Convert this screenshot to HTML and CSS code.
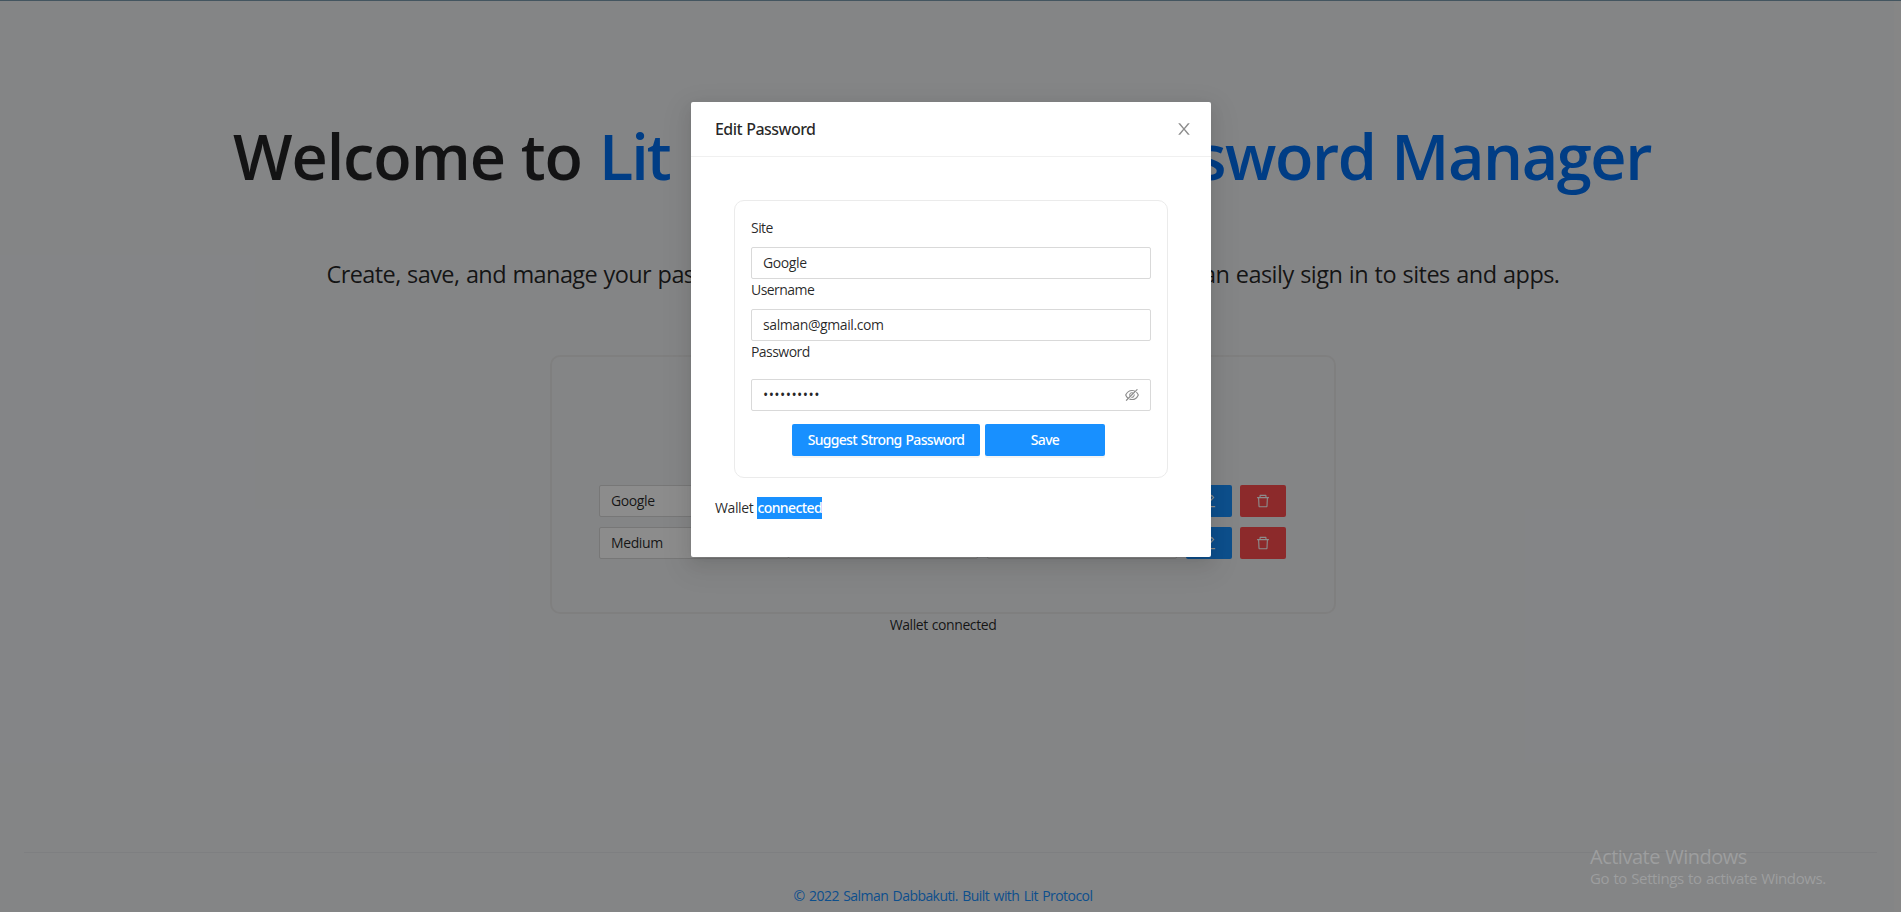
FILE: index.html
```html
<!DOCTYPE html>
<html lang="en">
<head>
<meta charset="utf-8">
<title>Password Manager</title>
<link rel="stylesheet" href="styles.css">
</head>
<body>
<svg width="0" height="0" class="defs">
  <symbol id="delete" viewBox="64 64 896 896"><path d="M360 184h-8c4.400 0 8-3.600 8-8v8h304v-8c0 4.400 3.600 8 8 8h-8v72h72v-80c0-35.300-28.700-64-64-64H352c-35.300 0-64 28.700-64 64v80h72v-72zm504 72H160c-17.700 0-32 14.300-32 32v32c0 4.400 3.600 8 8 8h60.400l24.700 523c1.600 34.100 29.800 61 63.900 61h454c34.200 0 62.300-26.800 63.900-61l24.700-523H888c4.400 0 8-3.600 8-8v-32c0-17.700-14.300-32-32-32zM731.300 840H292.700l-24.200-512h487l-24.200 512z"/></symbol>
  <symbol id="edit" viewBox="64 64 896 896"><path d="M257.700 752c2 0 4-.2 6-.5L431.900 722c2-.4 3.900-1.300 5.300-2.800l423.900-423.900a9.960 9.960 0 000-14.100L694.900 114.900c-1.900-1.900-4.400-2.900-7.100-2.900s-5.200 1-7.100 2.900L256.800 538.800c-1.500 1.500-2.400 3.300-2.800 5.300l-29.500 168.200a33.500 33.500 0 009.400 29.800c6.600 6.400 14.900 9.900 23.800 9.900zm67.400-174.400L687.800 215l73.300 73.300-362.700 362.600-88.900 15.700 15.600-89zM880 836H144c-17.700 0-32 14.300-32 32v36c0 4.400 3.600 8 8 8h784c4.400 0 8-3.600 8-8v-36c0-17.700-14.300-32-32-32z"/></symbol>
  <symbol id="close" viewBox="64 64 896 896"><path d="M563.800 512l262.500-312.900c4.400-5.200.7-13.100-6.100-13.100h-79.800c-4.700 0-9.200 2.100-12.300 5.700L511.600 449.800 295.100 191.700c-3-3.600-7.500-5.700-12.300-5.700H203c-6.800 0-10.500 7.900-6.100 13.100L459.400 512 196.900 824.900A7.950 7.950 0 00203 838h79.800c4.700 0 9.200-2.100 12.300-5.700l216.500-258.100 216.500 258.100c3 3.600 7.500 5.700 12.300 5.700h79.800c6.800 0 10.500-7.900 6.100-13.100L563.800 512z"/></symbol>
  <symbol id="eye-off" viewBox="64 64 896 896"><path d="M942.2 486.2Q889.47 375.11 816.7 305l-50.88 50.88C807.31 395.53 843.45 447.4 874.7 512 791.5 684.2 673.4 766 512 766q-72.67 0-133.87-22.38L323 798.75Q408 838 512 838q288.3 0 430.2-300.3a60.290 60.290 0 000-51.5zm-63.57-320.64L836 122.88a8 8 0 00-11.320 0L715.31 232.2Q624.86 186 512 186q-288.3 0-430.2 300.3a60.3 60.3 0 000 51.5q56.69 119.4 136.5 191.41L112.48 835a8 8 0 000 11.31L155.17 889a8 8 0 0011.31 0l712.15-712.12a8 8 0 000-11.32zM149.3 512C232.6 339.8 350.7 258 512 258c54.54 0 104.13 9.36 149.12 28.39l-70.3 70.3a176 176 0 00-238.13 238.13l-83.42 83.42C223.1 637.49 183.3 582.28 149.3 512zm246.7 0a112.11 112.11 0 01146.2-106.69L401.31 546.2A112 112 0 01396 512z"/><path d="M508 624c-3.46 0-6.87-.16-10.25-.47l-52.82 52.82a176.09 176.09 0 00227.42-227.42l-52.82 52.82c.31 3.38.47 6.79.47 10.25a111.940 111.940 0 01-112 112z"/></symbol>
</svg>

<div class="page">
  <main class="content">
    <h1 class="title"><span class="t-welcome">Welcome to</span><span class="t-lit">Lit</span><span class="t-manager">Password Manager</span></h1>
    <p class="subtitle"><span>Create, save, and manage your passwords securely with Lit</span><span class="s-end">so you can easily sign in to sites and apps.</span></p>
    <section class="card">
      <div class="row">
        <div class="input">Google</div><div class="input"></div><div class="input"></div>
        <button class="icon-btn edit"><svg><use href="#edit"/></svg></button>
        <button class="icon-btn delete"><svg><use href="#delete"/></svg></button>
      </div>
      <div class="row">
        <div class="input">Medium</div><div class="input"></div><div class="input"></div>
        <button class="icon-btn edit"><svg><use href="#edit"/></svg></button>
        <button class="icon-btn delete"><svg><use href="#delete"/></svg></button>
      </div>
    </section>
    <div class="status">Wallet connected</div>
  </main>
  <footer class="footer"><a>© 2022 Salman Dabbakuti. Built with Lit Protocol</a></footer>
  <div class="scrollbar"></div>
</div>

<div class="mask">
  <div class="modal">
    <header class="modal-head"><span>Edit Password</span><svg class="close"><use href="#close"/></svg></header>
    <div class="modal-body">
      <div class="form">
        <label>Site</label>
        <div class="input">Google</div>
        <label>Username</label>
        <div class="input">salman@gmail.com</div>
        <label>Password</label>
        <div class="input password"><span class="dots">••••••••••</span><svg><use href="#eye-off"/></svg></div>
        <div class="actions"><button class="btn suggest">Suggest Strong Password</button><button class="btn save">Save</button></div>
      </div>
      <div class="wallet">Wallet <span class="selected">connected</span></div>
    </div>
  </div>
</div>

<div class="watermark"><div class="wm-title">Activate Windows</div><div class="wm-text">Go to Settings to activate Windows.</div></div>
</body>
</html>
```
FILE: styles.css
```css
* { box-sizing: border-box; }
body {
  margin: 0;
  height: 912px;
  overflow: hidden;
  position: relative;
  background: #f0f2f5;
  color: rgba(0, 0, 0, .85);
  font: 14px/22px "Open Sans", "Noto Sans", sans-serif;
  letter-spacing: -.4px;
  word-spacing: .6px;
}
.defs { position: absolute; }
svg { fill: currentColor; }
button { font: inherit; letter-spacing: inherit; border: 0; padding: 0; }

/* Page behind the dialog */
.page {
  height: 912px;
  padding: 124px 15px 0 0;
  display: flex;
  flex-direction: column;
  border-top: 1px solid #7b9bb0;
  position: relative;
}
.content { display: flex; flex-direction: column; align-items: center; flex: 1; margin-top: -1px; }
.title {
  width: 1420px;
  margin: 0;
  display: flex;
  font-size: 63px;
  line-height: 64px;
  font-weight: 600;
  white-space: nowrap;
}
.t-welcome { width: 366px; letter-spacing: -1.1px; }
.t-lit { letter-spacing: -2px; color: #0070f3; }
.t-manager { margin: 0 2px 0 auto; letter-spacing: -1.4px; color: #0070f3; }
.subtitle {
  width: 1233px;
  margin: 71px 0 0;
  display: flex;
  justify-content: space-between;
  font-size: 23.5px;
  line-height: 30px;
  letter-spacing: -.6px;
  word-spacing: 1px;
  white-space: nowrap;
}
.s-end { letter-spacing: -.55px; }
.card {
  width: 786px;
  height: 259px;
  margin-top: 66px;
  padding: 128px 0 0 47px;
  border: 2px solid #e8e8e8;
  border-radius: 10px;
  display: flex;
  flex-direction: column;
  gap: 10px;
}
.row { display: flex; gap: 10px; }
.row .input { width: 190px; margin-right: -1px; }
.row .input + .input { margin-left: -10px; }
.row .input + .input + .input { margin-left: 0; }
.icon-btn {
  width: 46px;
  height: 32px;
  border-radius: 2px;
  color: #fff;
  display: grid;
  place-items: center;
}
.icon-btn svg { width: 14px; height: 14px; }
.edit { background: #1890ff; }
.delete { background: #ff4d4f; margin-left: -2px; }
.footer {
  margin: 0 9px 0 24px;
  height: 60px;
  border-top: 1px solid #e6e8eb;
  padding: 32px 15px 0 0;
  text-align: center;
  letter-spacing: -.56px;
  word-spacing: 1.3px;
  color: #1890ff;
}
.scrollbar { position: absolute; right: 0; top: 0; width: 7px; height: 911px; background: #f4f4f4; }

.input {
  height: 32px;
  padding: 4px 11px;
  border: 1px solid #d9d9d9;
  border-radius: 2px;
  background: #fff;
}

/* Dialog */
.mask { position: absolute; inset: 0; background: rgba(0, 0, 0, .45); padding: 102px 0 0 1px; }
.modal {
  width: 520px;
  height: 455px;
  margin: 0 auto;
  background: #fff;
  border-radius: 2px;
  box-shadow: 0 3px 6px -4px rgba(0,0,0,.12), 0 6px 16px 0 rgba(0,0,0,.08), 0 9px 28px 8px rgba(0,0,0,.05);
}
.modal-head {
  height: 55px;
  padding: 0 19px 0 24px;
  display: flex;
  align-items: center;
  justify-content: space-between;
  border-bottom: 1px solid #f0f0f0;
  font: 500 16px/22px "Noto Sans", sans-serif;
  letter-spacing: -.55px;
}
.close { width: 16px; height: 16px; color: rgba(0, 0, 0, .45); }
.modal-body { padding: 43px 24px 0; }
.form {
  width: 434px;
  height: 278px;
  margin: 0 auto;
  padding: 16px;
  border: 1px solid #ebebeb;
  border-radius: 10px;
}
.form label { display: block; margin-bottom: 8px; letter-spacing: -.55px; }
.form .password { margin-top: 16px; display: flex; align-items: center; justify-content: space-between; }
.dots { letter-spacing: .42px; }
.password svg { width: 14px; height: 14px; color: rgba(0, 0, 0, .45); }
.actions { display: flex; justify-content: center; gap: 5px; margin: 13px 5px 0 0; }
.btn {
  height: 32px;
  border-radius: 2px;
  background: #1890ff;
  color: #fff;
  font: 500 14px/22px "Noto Sans", sans-serif;
  letter-spacing: -.68px;
  word-spacing: 1px;
  box-shadow: 0 2px 0 rgba(0, 0, 0, .045);
}
.suggest { width: 188px; }
.save { width: 120px; }
.wallet { margin-top: 19px; letter-spacing: -.4px; word-spacing: 1px; }
.selected {
  display: inline-block;
  background: #1890ff;
  color: #fff;
  font-family: "Noto Sans", sans-serif;
  font-weight: 500;
  letter-spacing: -.6px;
  vertical-align: top;
}

.watermark { position: absolute; left: 1590px; top: 844px; color: #9d9e9f; }
.wm-title { font-size: 20px; line-height: 25px; letter-spacing: -.5px; }
.wm-text { font-size: 15px; line-height: 19px; letter-spacing: -.4px; word-spacing: .8px; }
```
